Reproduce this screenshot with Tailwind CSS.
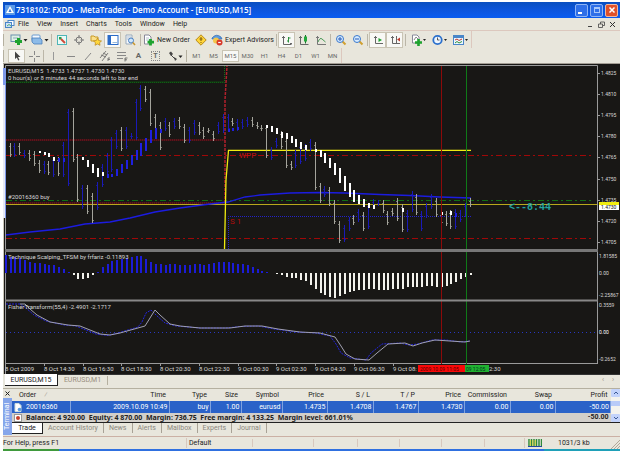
<!DOCTYPE html>
<html lang="en">
<head>
<meta charset="utf-8">
<meta name="viewport" content="width=device-width, initial-scale=1">
<title>7318102: FXDD - MetaTrader - Demo Account - [EURUSD,M15]</title>
<script src="https://cdn.jsdelivr.net/npm/@tailwindcss/browser@4"></script>
</head>
<body class="bg-white font-['Roboto','Liberation_Sans',sans-serif] text-[7px] leading-[10px] text-[#222]">
<div class="pt-[2px] pl-[3px] pr-[5px]">

    <!-- Title bar -->
    <header class="flex h-4 items-center bg-linear-to-b from-[#0a4fc0] via-[#0d55dc] to-[#0a5cf0] px-[2px] text-white">
        <svg class="h-[10px] w-[10px] shrink-0" viewBox="0 0 10 10"><rect width="10" height="10" fill="#5d9be8"/><path d="M5 1 L9 8 H1Z" fill="#fff"/><path d="M5 3.5 L6.5 7 H3.5Z" fill="#3c78d0"/></svg>
        <h1 class="ml-px grow truncate font-['Open_Sans','Noto_Sans',sans-serif] text-[8px] leading-3 font-semibold">7318102: FXDD - MetaTrader - Demo Account - [EURUSD,M15]</h1>
        <div class="flex gap-[2px]">
            <button aria-label="Minimize" class="flex h-[13px] w-[13px] items-end justify-start rounded-[2px] border border-[#8fb5f5] bg-[#2f6fe8] p-[2px]"><span class="h-[2px] w-1 bg-white"></span></button>
            <button aria-label="Restore" class="flex h-[13px] w-[13px] items-center justify-center rounded-[2px] border border-[#8fb5f5] bg-[#2f6fe8]"><span class="h-[6px] w-[6px] border border-t-2 border-[#a9c8fa]"></span></button>
            <button aria-label="Close" class="flex h-[13px] w-[13px] items-center justify-center rounded-[2px] border border-[#f0b9a0] bg-[#e0512a]">
                <svg class="h-2 w-2" viewBox="0 0 8 8"><path d="M1.5 1.5 L6.5 6.5 M6.5 1.5 L1.5 6.5" stroke="#fff" stroke-width="1.5"/></svg>
            </button>
        </div>
    </header>

    <!-- Menu -->
    <nav class="flex h-3 items-center bg-[#e8e6dc] pl-[2px]">
        <svg class="h-[9px] w-[10px] shrink-0" viewBox="0 0 10 9"><rect x="3" y=".5" width="6" height="5" fill="#fff" stroke="#4a86c8"/><rect x=".5" y="2.5" width="6" height="5" fill="#cfe2f7" stroke="#4a86c8"/><path d="M2 6 L4 4.5 L6 6" stroke="#2f9a4a" fill="none" stroke-width=".8"/></svg>
        <ul class="ml-[3px] flex grow gap-2">
            <li><a href="#">File</a></li>
            <li><a href="#">View</a></li>
            <li><a href="#">Insert</a></li>
            <li><a href="#">Charts</a></li>
            <li><a href="#">Tools</a></li>
            <li><a href="#">Window</a></li>
            <li><a href="#">Help</a></li>
        </ul>
        <div class="flex gap-1 pr-1">
            <button aria-label="Minimize chart"><svg class="h-[7px] w-[7px]" viewBox="0 0 7 7"><path d="M1 5.5 H5" stroke="#444"/></svg></button>
            <button aria-label="Restore chart"><svg class="h-[7px] w-[7px]" viewBox="0 0 7 7"><path d="M2.5 3 V1 H6.5 V4.5 H5 M.5 3 H4.5 V6.5 H.5Z" fill="none" stroke="#444" stroke-width=".8"/></svg></button>
            <button aria-label="Close chart"><svg class="h-[7px] w-[7px]" viewBox="0 0 7 7"><path d="M1 1 L6 6 M6 1 L1 6" stroke="#333"/></svg></button>
        </div>
    </nav>

    <div class="border-t border-[#dcc8be] bg-[#e8e6dc]">
        <!-- Standard toolbar -->
        <div class="flex h-[17px] w-max items-center border-r border-[#dcc8be]">
            <span class="mr-1 h-3 w-px bg-[#b5b0a0]"></span>
            <button aria-label="New chart" class="flex w-[21px] items-center justify-center">
                <svg class="h-3 w-[18px]" viewBox="0 0 18 12"><rect x="1" y="1" width="9" height="6.5" fill="#dff0e4" stroke="#6b8fae"/><path d="M3 4 H8" stroke="#8ab"/><path d="M8.5 4 V11 M5 7.5 H12" stroke="#1ea32f" stroke-width="3"/><path d="M13.500 5 H17.500 L15.500 7.500Z" fill="#222"/></svg>
            </button>
            <button aria-label="Profiles" class="flex w-[21px] items-center justify-center">
                <svg class="h-3 w-[18px]" viewBox="0 0 18 12"><rect x="1" y="1" width="8" height="6" rx="1" fill="#f4f9ff" stroke="#6b9bd0"/><path d="M1 4 H9 L11 6 V10 H3 L1 8Z" fill="#8dbbe8" stroke="#4a7fba" stroke-width=".8"/><path d="M13.500 5 H17.500 L15.500 7.500Z" fill="#222"/></svg>
            </button>
            <span class="mx-px h-3 w-px bg-[#bbb6a8]"></span>
            <button aria-label="Market watch" class="flex w-[17px] justify-center">
                <svg class="h-3 w-3" viewBox="0 0 12 12"><rect x="1.500" y="1.500" width="9" height="9" fill="#eafaf6" stroke="#4fb5b8"/><path d="M3 3 H5.500 V5.500 H3Z" fill="#2aa04a"/><path d="M5 5 L9 9" stroke="#d04a3a" stroke-width="2"/></svg>
            </button>
            <button aria-label="Data window" class="flex w-[17px] justify-center">
                <svg class="h-3 w-3" viewBox="0 0 12 12"><circle cx="6" cy="6" r="3" fill="none" stroke="#777"/><path d="M6 1 V4.500 M6 7.500 V11 M1 6 H4.500 M7.500 6 H11" stroke="#777"/></svg>
            </button>
            <button aria-label="Navigator" class="flex w-[17px] justify-center">
                <svg class="h-3 w-3" viewBox="0 0 12 12"><path d="M1 2 H4 L5 3 H8 V7 H1Z" fill="#fbe08a" stroke="#c89a28"/><path d="M7.500 4 L8.700 6.500 L11.500 7 L9.500 8.700 L10 11.300 L7.500 10 L5 11.300 L5.500 8.700 L3.500 7 L6.300 6.500Z" fill="#ffd83c" stroke="#b9851a" stroke-width=".7"/></svg>
            </button>
            <button aria-label="Terminal" aria-pressed="true" class="flex w-[17px] justify-center border border-[#c9c4b4] bg-white/70 py-px">
                <svg class="h-3 w-3" viewBox="0 0 12 12"><rect x="1" y="1.500" width="10" height="9" fill="#fff" stroke="#2c6cc8"/><rect x="1" y="1.500" width="3" height="9" fill="#2c6cc8"/><path d="M5.500 8.500 H10" stroke="#9bd"/></svg>
            </button>
            <button aria-label="Strategy tester" class="flex w-[17px] justify-center">
                <svg class="h-3 w-3" viewBox="0 0 12 12"><path d="M2 1 H8 V10 H2Z" fill="#f5f8fc" stroke="#9ab"/><path d="M3 3 H7 M3 5 H6" stroke="#9ab" stroke-width=".7"/><circle cx="7" cy="6.500" r="2.500" fill="#cfe6fb" stroke="#4a80c0"/><path d="M8.800 8.500 L11 11" stroke="#c8962c" stroke-width="1.500"/></svg>
            </button>
            <span class="mx-[2px] h-3 w-px bg-[#bbb6a8]"></span>
            <button class="flex w-[49px] items-center gap-[2px]">
                <svg class="h-3 w-3 shrink-0" viewBox="0 0 12 12"><path d="M1.500 1 H6 L8 3 V10 H1.500Z" fill="#fff" stroke="#889"/><path d="M3 4 H6 M3 6 H6" stroke="#9ab" stroke-width=".7"/><path d="M7.500 5 V11.500 M4.500 8.200 H11" stroke="#1ea32f" stroke-width="2.800"/></svg>
                <span class="whitespace-nowrap">New Order</span>
            </button>
            <button aria-label="MetaEditor" class="flex w-[17px] justify-center">
                <svg class="h-3 w-3" viewBox="0 0 12 12"><path d="M6 .8 L11.200 6 L6 11.200 L.8 6Z" fill="#ffd53a" stroke="#b88a1c"/><path d="M6 3 V7 M4.500 5 H7.500 M6 8 V9" stroke="#7a5a10"/></svg>
            </button>
            <button class="flex w-[67px] items-center justify-center gap-[2px]">
                <svg class="h-3 w-3 shrink-0" viewBox="0 0 12 12"><path d="M1 4 Q5 -1 10 3 L11 5 H1Z" fill="#5a9ae0" stroke="#2f68b0" stroke-width=".7"/><circle cx="5" cy="6.500" r="3" fill="#f4c64a"/><circle cx="8.500" cy="8.500" r="3" fill="#d8392a"/><path d="M7.200 8.500 H9.800" stroke="#fff" stroke-width="1.200"/></svg>
                <span class="whitespace-nowrap">Expert Advisors</span>
            </button>
            <span class="mr-px h-3 w-px bg-[#bbb6a8]"></span>
            <button aria-label="Bar chart" aria-pressed="true" class="flex w-[17px] justify-center border border-[#c9c4b4] bg-white/70 py-px">
                <svg class="h-3 w-3" viewBox="0 0 12 12"><path d="M2.500 2 V10.500 H10.500 M1 3.500 H4 M9 9.500 H11" stroke="#666" fill="none"/><path d="M7.500 3 V8.500 M6 7 H7.500 M7.500 4 H9.500" stroke="#2b8f3c" fill="none"/></svg>
            </button>
            <button aria-label="Candlesticks" class="flex w-[17px] justify-center">
                <svg class="h-3 w-3" viewBox="0 0 12 12"><path d="M2.500 2 V10.500 H10.500 M1 3.500 H4" stroke="#666" fill="none"/><path d="M7.500 1 V9.500" stroke="#18702a"/><rect x="6" y="2.500" width="3" height="5" fill="#22a83a"/></svg>
            </button>
            <button aria-label="Line chart" class="flex w-[17px] justify-center">
                <svg class="h-3 w-3" viewBox="0 0 12 12"><path d="M2.500 2 V10.500 H11 M1 3.500 H4" stroke="#777" fill="none"/><path d="M3 8 Q5 3 7 5 L10.500 8" stroke="#4a9a58" fill="none"/></svg>
            </button>
            <span class="mx-px h-3 w-px bg-[#bbb6a8]"></span>
            <button aria-label="Zoom in" class="flex w-[17px] justify-center">
                <svg class="h-3 w-3" viewBox="0 0 12 12"><path d="M7.500 7.500 L10.500 10.500" stroke="#d0a030" stroke-width="2"/><circle cx="5" cy="5" r="3.500" fill="#d6ebff" stroke="#3b78cc"/><path d="M5 3 V7 M3 5 H7" stroke="#2458b8"/></svg>
            </button>
            <button aria-label="Zoom out" class="flex w-[17px] justify-center">
                <svg class="h-3 w-3" viewBox="0 0 12 12"><path d="M7.500 7.500 L10.500 10.500" stroke="#d0a030" stroke-width="2"/><circle cx="5" cy="5" r="3.500" fill="#d6ebff" stroke="#3b78cc"/><path d="M3 5 H7" stroke="#2458b8"/></svg>
            </button>
            <span class="mx-px h-3 w-px bg-[#bbb6a8]"></span>
            <button aria-label="Auto scroll" aria-pressed="true" class="flex w-[17px] justify-center border border-[#c9c4b4] bg-white/70 py-px">
                <svg class="h-3 w-3" viewBox="0 0 12 12"><path d="M3.500 2 V9.500 H11 M2 3.500 H5" stroke="#666" fill="none"/><path d="M6.500 4 L10 6 L6.500 8Z" fill="#1ea32f"/></svg>
            </button>
            <button aria-label="Chart shift" aria-pressed="true" class="flex w-[17px] justify-center border border-[#c9c4b4] bg-white/70 py-px">
                <svg class="h-3 w-3" viewBox="0 0 12 12"><path d="M3.500 2 V9.500 H11 M2 3.500 H5 M7.500 2 V9" stroke="#666" fill="none"/><path d="M11 3.500 L8 5.500 L11 7.500Z" fill="#c0392b"/></svg>
            </button>
            <span class="mx-[2px] h-3 w-px bg-[#bbb6a8]"></span>
            <button aria-label="Indicators" class="flex w-[21px] justify-center">
                <svg class="h-3 w-[18px]" viewBox="0 0 18 12"><path d="M2.500 1 H7 L9 3 V9 H2.500Z" fill="#fff" stroke="#889"/><path d="M4 6 L6 3 L8 5" stroke="#888" fill="none"/><path d="M8.500 5 V12 M5 8.500 H12" stroke="#1ea32f" stroke-width="2.600"/><path d="M13 5 H16 L14.500 7Z" fill="#222"/></svg>
            </button>
            <button aria-label="Periods" class="flex w-[21px] justify-center">
                <svg class="h-3 w-[18px]" viewBox="0 0 18 12"><circle cx="6.500" cy="6" r="4.200" fill="#eef6ff" stroke="#2b70cc" stroke-width="1.800"/><path d="M6.500 3.500 V6 H8.500" stroke="#333" fill="none" stroke-width=".8"/><path d="M13 5 H16 L14.500 7Z" fill="#222"/></svg>
            </button>
            <button aria-label="Templates" class="flex w-[21px] justify-center">
                <svg class="h-3 w-[18px]" viewBox="0 0 18 12"><rect x="1.500" y="1.500" width="10" height="9" fill="#eef6ff" stroke="#4a86c8"/><path d="M1.500 3 H11.500" stroke="#4a86c8" stroke-width="2"/><path d="M3 6 L5 5 L7 6.500 L10 5" stroke="#c0392b" fill="none"/><path d="M3 9 L5 7.500 L7 9 L10 7.500" stroke="#2b8f3c" fill="none"/><path d="M13 5 H16 L14.500 7Z" fill="#222"/></svg>
            </button>
        </div>

        <!-- Line studies and timeframes -->
        <div class="flex h-[15px] w-max items-center border-r border-[#dcc8be] text-[6px] text-[#666]">
            <span class="mr-1 h-3 w-px bg-[#b5b0a0]"></span>
            <button aria-label="Cursor" aria-pressed="true" class="flex w-[17px] justify-center border border-[#c9c4b4] bg-white/70">
                <svg class="h-3 w-3" viewBox="0 0 12 12"><path d="M4 1.500 V9 L5.800 7.500 L7.200 10.500 L8.500 10 L7 7 H9.500Z" fill="#444"/></svg>
            </button>
            <button aria-label="Crosshair" class="flex w-[17px] justify-center"><svg class="h-3 w-3" viewBox="0 0 12 12"><path d="M6.500 1 V5 M6.500 8 V12 M1 6.500 H5 M8 6.500 H12" stroke="#888"/></svg></button>
            <span class="mx-px h-3 w-px bg-[#bbb6a8]"></span>
            <button aria-label="Vertical line" class="flex w-[17px] justify-center"><svg class="h-3 w-3" viewBox="0 0 12 12"><path d="M5.500 2 V10" stroke="#999"/></svg></button>
            <button aria-label="Horizontal line" class="flex w-[17px] justify-center"><svg class="h-3 w-3" viewBox="0 0 12 12"><path d="M2 6.500 H10" stroke="#888"/></svg></button>
            <button aria-label="Trendline" class="flex w-[17px] justify-center"><svg class="h-3 w-3" viewBox="0 0 12 12"><path d="M3 10 L9 3" stroke="#888"/></svg></button>
            <button aria-label="Channel" class="flex w-[17px] justify-center"><svg class="h-3 w-3" viewBox="0 0 12 12"><path d="M1 8 L7 1 M3 11 L9 3 M2 5 L7 7 M4 3 L8 5 M9 8 H11 M9 8 V11 M9 9.500 H11" stroke="#666" stroke-width=".8" fill="none"/></svg></button>
            <button aria-label="Fibonacci" class="flex w-[17px] justify-center"><svg class="h-3 w-3" viewBox="0 0 12 12"><path d="M1 2.500 H10 M1 5.500 H10 M1 8.500 H7" stroke="#888"/><path d="M9 8 H11.500 M9 8 V11.500 M9 9.800 H11" stroke="#555" stroke-width=".8"/></svg></button>
            <button aria-label="Text" class="w-[17px] text-[8px] font-bold">A</button>
            <button aria-label="Text label" class="flex w-[17px] justify-center"><span class="w-[9px] border border-dotted border-[#888] text-[7px] leading-[8px] font-bold">T</span></button>
            <button aria-label="Arrows" class="flex w-[21px] justify-center"><svg class="h-3 w-[18px]" viewBox="0 0 18 12"><path d="M3 3 L5 1.500 L7 4 L5 6Z" fill="#444"/><path d="M5 5 L9 9" stroke="#444"/><path d="M8 7 L11 9 L9 11Z" fill="#444"/><path d="M12.500 5.500 H16.500 L14.500 8Z" fill="#222"/></svg></button>
            <span class="mx-px h-3 w-px bg-[#b5b0a0]"></span>
            <button class="w-[17px]">M1</button>
            <button class="w-[17px]">M5</button>
            <button aria-pressed="true" class="w-[17px] border border-[#c9c4b4] bg-white/70">M15</button>
            <button class="w-[17px]">M30</button>
            <button class="w-[17px]">H1</button>
            <button class="w-[17px]">H4</button>
            <button class="w-[17px]">D1</button>
            <button class="w-[17px]">W1</button>
            <button class="w-[17px]">MN</button>
        </div>
    </div>

    <!-- Chart window -->
    <svg id="chart" class="block w-full" viewBox="3 63 617 311" font-size="6" fill="#d8d8d8">
        <rect x="3" y="63" width="617" height="311" fill="#181715"/>
        <path d="M3 63.500 H620" stroke="#a39d94"/>
        <path d="M5.500 374 V65.500 H597.500 V363.500 M5 363.500 H598" fill="none" stroke="#9a9a9a"/>
        <path d="M3.500 64 V374" stroke="#c8c4b8"/>
        <rect x="3" y="68" width="3" height="150" fill="#e6e9f5"/>
        <path d="M5.500 68 V218" stroke="#7d98ea"/>
        <rect x="3" y="68" width="3" height="17" fill="#7d98ea"/>
        <!-- levels -->
        <g fill="none">
            <path d="M6 82.500 H224.500 V66" stroke="#157018" stroke-dasharray="1 1"/>
            <path d="M6 82 H224" stroke="#0c4c10" stroke-width="1"/>
            <path d="M6 140 H225 M6 203 H225" stroke="#7d1620" stroke-width="1.500" stroke-dasharray="1 1"/>
            <path d="M6 140 H225 M6 203 H225" stroke="#5d1018"/>
            <path d="M225 203 V100 L227 66" stroke="#b0202c" stroke-width="1.500" stroke-dasharray="3 1"/>
            <path d="M6 155.500 H593 M6 238.500 H593" stroke="#a00808" stroke-dasharray="6 3 2 3"/>
            <path d="M6 200.500 H593" stroke="#117014" stroke-dasharray="6 3 2 3"/>
            <path d="M6 204.500 H597" stroke="#b8a81c"/>
            <path d="M228.500 249 V216.500 H471" stroke="#2222c8" stroke-dasharray="1 1"/>
            <path d="M6 235 L30 232 L60 229 L85 224 L110 222 L130 218 L155 212 L180 208 L210 204 L228 202 L245 197 L260 195 L290 193 L320 192.500 L345 193 L380 194.500 L410 195.500 L440 197 L471 198" stroke="#1c1ce0" stroke-width="1.300"/>
            <path d="M224.500 249 L226 180 L228.500 150.300 H471" stroke="#f0ec10" stroke-width="1.300"/>
            <path d="M6 332.500 H597" stroke="#2838c0" stroke-dasharray="1 3"/>
        </g>
        <g id="bars"></g>
        <path d="M441.500 66 V364" stroke="#8c0a0a"/>
        <path d="M466.500 66 V364" stroke="#0f7a18"/>
        <path d="M5 250.500 H598" stroke="#777" stroke-width="3"/>
        <path d="M5 300.500 H598" stroke="#888" stroke-width="2"/>
        <!-- FisherTransform -->
        <g fill="none">
            <path d="M6 304 L20 304 L26 308 L34 315 L46 321 L64 325 L76 326 L86 330 L96 334 L108 335.500 L118 333 L138 327 L142 322 L146 313 L151 310 L156 315 L165 323 L176 326 L200 328 L226 328 L240 326.500 L258 326 L274 329 L296 332 L316 333 L330 336 L336 344 L341 353 L350 358 L366 360 L371 353 L382 344 L400 343 L409 345 L418 344 L432 340 L446 340 L461 342 L470 341" stroke="#2424dc" stroke-dasharray="2 1"/>
            <path d="M20 304 H25 L30 309 L37 315 L50 322 L68 325 L80 326 L90 330 L100 334 L110 335 L120 333 L145 326 L150 318 L155 310 L160 315 L170 324 L180 326 L200 328 L230 328 L245 326 L262 326 L278 329 L300 332 L320 333 L335 337 L341 346 L346 354 L355 359 L369 360 L377 353 L388 344 L405 343 L413 346 L422 343 L435 340 L450 341 L465 342 L470 341" stroke="#a0a0b0"/>
        </g>
        <!-- captions -->
        <text x="8" y="73">EURUSD,M15&#160; 1.4733 1.4737 1.4730 1.4730</text>
        <text x="8" y="80">0 hour(s) or 8 minutes 44 seconds left to bar end</text>
        <text x="8" y="199">#20016360 buy</text>
        <text x="8" y="259">Technique Scalping_TFSM by frfariz -0.11893</text>
        <text x="8" y="309">FisherTransform(55,4) -2.4901 -2.1717</text>
        <text x="239" y="158" fill="#c81010" font-size="8">WPP</text>
        <text x="230" y="224" fill="#b00c0c" font-size="8">S 1</text>
        <text x="509" y="210" fill="#22a5a0" font-size="10" font-weight="bold" font-family="Liberation Mono, monospace">&lt;--8:44</text>
        <!-- price scale -->
        <g id="prices" font-size="5"></g>
        <rect x="599" y="202" width="20" height="3" fill="#f0ec10"/>
        <rect x="599" y="205" width="20" height="5" fill="#fff"/>
        <g font-size="5">
            <text x="601" y="209" fill="#111">1.4730</text>
            <text x="599" y="258">1.81585</text>
            <text x="599" y="275">0.00</text>
            <text x="599" y="297">-2.25867</text>
            <text x="599" y="307">0.3559</text>
            <text x="599" y="334" fill="#fff">0.00</text>
            <text x="599" y="361">-0.2652</text>
        </g>
        <!-- time scale -->
        <g id="times"></g>
        <text x="489" y="371">2:30</text>
        <rect x="418" y="365" width="47" height="7" fill="#f80808"/>
        <rect x="465" y="365" width="24" height="7" fill="#20b030"/>
        <g font-size="5">
            <text x="420" y="371" fill="#500">2009.10.09 11:05</text>
            <text x="466" y="371" fill="#032">09 12:05</text>
        </g>
    </svg>

    <!-- Chart tabs -->
    <div class="bg-[#e8e6dc] pb-[2px]">
        <div class="flex h-3 items-start pl-[2px]">
            <button class="h-3 w-[53px] border-r border-b border-[#222] bg-white text-center">EURUSD,M15</button>
            <div class="flex grow items-center border-t border-[#333] pr-[2px] text-[#9a8f80]">
                <button class="w-[50px] border-r border-[#b5b0a0] leading-[9px]">EURUSD,M1</button>
                <span class="grow"></span>
                <button aria-label="Scroll tabs left" class="w-[10px]">‹</button>
                <button aria-label="Scroll tabs right" class="w-[10px]">›</button>
            </div>
        </div>
    </div>

    <!-- Terminal -->
    <section class="flex border-t border-[#b5b0a0] bg-[#e8e6dc]">
        <div class="flex w-[9px] shrink-0 flex-col items-center">
            <button aria-label="Close terminal" class="flex h-[9px] items-center"><svg class="h-[5px] w-[5px]" viewBox="0 0 5 5"><path d="M.5 .5 L4.500 4.500 M4.500 .5 L.5 4.500" stroke="#222"/></svg></button>
            <span class="w-full grow rotate-180 bg-[#86a6ea] text-center leading-[9px] text-white [writing-mode:vertical-rl]">Terminal</span>
        </div>
        <div class="min-w-0 grow">
            <div class="flex border-b border-[#222]">
                <table class="grow table-fixed border-collapse text-right whitespace-nowrap">
                    <colgroup>
                        <col class="w-[58px]"><col class="w-[99px]"><col class="w-[41px]"><col class="w-[31px]"><col class="w-[41px]"><col class="w-[45px]"><col class="w-[46px]"><col class="w-[45px]"><col class="w-[46px]"><col class="w-[46px]"><col class="w-[45px]"><col>
                    </colgroup>
                    <thead>
                        <tr class="h-3 *:p-0 *:pr-[3px] *:font-normal">
                            <th class="text-left"><span class="pl-[7px]">Order</span><span class="pl-2 text-[#a09a8c]">⁄</span></th><th>Time</th><th>Type</th><th>Size</th><th>Symbol</th><th>Price</th><th>S / L</th><th>T / P</th><th>Price</th><th>Commission</th><th>Swap</th><th>Profit</th>
                        </tr>
                    </thead>
                    <tbody>
                        <tr class="h-3 bg-[#2a62c8] text-white *:border-r *:border-[#7fa2e0] *:p-0 *:pr-px">
                            <td><span class="flex items-center gap-1 pl-[2px]"><svg class="h-[9px] w-2" viewBox="0 0 8 9"><path d="M1 .5 H5 L7 2.500 V8.500 H1Z" fill="#fff" stroke="#cdd"/><circle cx="5.500" cy="6.500" r="1.800" fill="#5a9ae0"/></svg>20016360</span></td>
                            <td>2009.10.09 10:49</td><td>buy</td><td>1.00</td><td>eurusd</td><td>1.4735</td><td>1.4708</td><td>1.4767</td><td>1.4730</td><td>0.00</td><td>0.00</td><td>-50.00</td>
                        </tr>
                        <tr class="bg-[#d2cfca] leading-[9px] font-bold text-[#222] *:p-0">
                            <td colspan="11"><span class="flex items-center gap-1 pl-[2px]"><svg class="h-2 w-2" viewBox="0 0 8 8"><rect x=".5" y=".5" width="7" height="7" fill="#fff" stroke="#999"/><circle cx="4" cy="4" r="2" fill="#c8402a"/></svg><span class="font-['Noto_Sans','Open_Sans',sans-serif]">Balance: 4 920.00&#160; Equity: 4 870.00&#160; Margin: 736.75&#160; Free margin: 4 133.25&#160; Margin level: 661.01%</span></span></td>
                            <td><span class="pr-[2px]">-50.00</span></td>
                        </tr>
                    </tbody>
                </table>
                <div class="flex w-[9px] shrink-0 flex-col justify-between bg-[#f4f3ee]">
                    <button aria-label="Scroll up" class="flex h-2 items-center justify-center rounded-[1px] bg-[#c3d3fb]"><svg class="h-1 w-[6px]" viewBox="0 0 6 4"><path d="M1 3 L3 1 L5 3" fill="none" stroke="#3c5a96"/></svg></button>
                    <span class="-mt-1 h-[5px] bg-[#b9cbf8]"></span>
                    <button aria-label="Scroll down" class="flex h-2 items-center justify-center rounded-[1px] bg-[#c3d3fb]"><svg class="h-1 w-[6px]" viewBox="0 0 6 4"><path d="M1 1 L3 3 L5 1" fill="none" stroke="#3c5a96"/></svg></button>
                </div>
            </div>
            <div class="flex h-3 items-start text-[#8c8880]">
                <button class="h-[11px] w-[31px] border-r border-b border-[#222] bg-white text-[#222]">Trade</button>
                <div class="flex divide-x divide-[#a8a296] *:px-[5px]">
                    <button>Account History</button>
                    <button>News</button>
                    <button>Alerts</button>
                    <button>Mailbox</button>
                    <button>Experts</button>
                    <button>Journal</button>
                    <span></span>
                </div>
            </div>
        </div>
    </section>

    <!-- Status bar -->
    <footer class="bg-[#e8e6dc] pt-px">
        <div class="flex h-[13px] items-center border-t border-[#cbb0a4]">
            <span class="w-[183px]">For Help, press F1</span>
            <span class="w-[66px] border-l border-[#d8c8be] pl-[2px]">Default</span>
            <span class="h-2 w-[61px] border-l border-[#d8c8be]"></span>
            <span class="h-2 w-11 border-l border-[#d8c8be]"></span>
            <span class="h-2 w-[42px] border-l border-[#d8c8be]"></span>
            <span class="h-2 w-[42px] border-l border-[#d8c8be]"></span>
            <span class="h-2 w-[43px] border-l border-[#d8c8be]"></span>
            <span class="h-2 w-10 border-l border-[#d8c8be]"></span>
            <span class="flex grow items-center gap-4 border-l border-[#d8c8be] pl-[3px]">
                <svg class="h-2 w-[14px]" viewBox="0 0 14 8"><path d="M1 0 V8 M3.500 0 V8 M6 0 V8 M8.500 0 V8 M11 0 V8 M13.500 0 V8" stroke="#2f8a3c" stroke-width="1.500"/><path d="M2.300 1 V8 M4.800 1 V8 M7.300 1 V8" stroke="#d8d23c"/><path d="M0 7.500 H14" stroke="#2448a0"/></svg>
                1031/3 kb
            </span>
            <svg class="h-[9px] w-[9px] self-end" viewBox="0 0 9 9"><path d="M0 9 L9 0 M3 9 L9 3 M6 9 L9 6" stroke="#b0a898"/></svg>
        </div>
    </footer>
    <div class="flex h-[2px]"><span class="w-14 bg-[#3f9a3c]"></span><span class="grow bg-[#2f70e0]"></span><span class="w-[76px] bg-[#1fa0b8]"></span></div>
</div>

<script>
const NS = 'http://www.w3.org/2000/svg';
const STEP = 4.843;
const X0 = 5.8;

function add(parent, tag, attrs, text) {
    const el = document.createElementNS(NS, tag);
    for (const k in attrs) el.setAttribute(k, attrs[k]);
    if (text) el.textContent = text;
    document.getElementById(parent).appendChild(el);
}

// colour, high, low for every bar
const candles = `w143-157 b143-157 w143-155 b150-158 w150-161 w151-166 w160-173 b161-174 w161-175 b157-177 w157-176 b142-177
b109-186 w108-162 w154-202 b185-209 w185-214 w193-223 b182-210 b164-187 b153-174 b137-172 b130-149 w127-151 b127-149 b133-139
b99-140 b85-111 w86-102 w89-126 w114-133 w122-150 b118-131 w122-137 b118-129 w117-129 w124-143 b127-143 b120-135 w122-135
w127-139 w128-133 w131-141 b122-134 b114-133 b114-131 w118-126 b119-131 b119-129 b117-127 w117-127 w122-129 w125-131 w125-158
b147-160 b138-148 w131-149 w138-168 w161-170 b150-168 b144-164 b144-161 b139-151 w142-190 w183-203 b186-197 w187-206
w200-224 w221-243 b225-242 b217-231 w215-225 b209-222 w212-231 b203-229 b199-208 b200-206 w200-213 w211-225 w208-216
w198-221 w204-232 b210-232 b191-212 w194-215 b211-231 b203-218 b194-209 w198-217 w212-225 w211-226 w210-229 b209-229
b210-222 b203-217 w198-207`.split(/\s+/);

candles.forEach((c, n) => {
    const [hi, lo] = c.slice(1).split('-').map(Number);
    const x = Math.round(X0 + STEP * (n + 1)) - 0.5;
    const stroke = c[0] === 'w' ? '#a4a49c' : '#1a1ab8';
    add('bars', 'path', {d: `M${x} ${hi} V${lo}`, stroke});
    add('bars', 'path', {d: `M${x - 1.5} ${hi + 3.5} h1 M${x + 0.5} ${lo - 2.5} h1`, stroke, opacity: 0.7});
});

// smoothed bodies: index, top, bottom
const down = [[7,151,153],[8,152,155],[9,153,157],[10,157,161],[16,157,160],[17,160,167],[18,164,173],[19,168,177],[20,172,176],
    [54,125,128],[55,126,132],[56,128,134],[57,132,138],[58,133,139],[59,136,143],[60,139,147],[61,142,149],[62,145,150],
    [64,149,152],[65,150,157],[66,153,163],[67,158,168],[68,163,175],[69,168,183],[70,176,191],[71,183,197],[72,190,202],
    [73,195,204],[74,199,207],[75,203,208],[76,205,209],[82,208,212],[90,212,215],[92,211,215]];
const up = [[11,158,162],[12,158,162],[21,174,178],[22,174,177],[23,169,176],[24,164,173],[25,160,169],[26,155,165],[27,150,160],
    [28,143,156],[29,138,151],[30,130,143],[31,128,139],[32,129,133],[46,129,132],[47,128,131],[48,127,130],[93,213,217]];
down.forEach(([i, a, b]) => add('bars', 'rect', {x: Math.round(X0 + STEP * i) - 1, y: a, width: 2, height: b - a, fill: '#fff'}));
up.forEach(([i, a, b]) => add('bars', 'rect', {x: Math.round(X0 + STEP * i) - 1, y: a, width: 2, height: b - a, fill: '#2020e0'}));

// histogram
const hist = [18,16,16,15,13,11,10,10,9,8,8,6,4,1,-2,-6,-6,-5,-2,1,6,9,12,13,14,15,16,17,17,14,11,9,9,8,9,9,8,8,8,9,9,8,9,10,11,11,
    11,10,9,9,8,6,4,2,1,0,-1,-2,-4,-5,-5,-7,-8,-12,-16,-20,-22,-24,-25,-23,-21,-19,-18,-17,-17,-16,-16,-17,-17,-17,-16,-16,-16,
    -14,-14,-14,-14,-13,-13,-14,-14,-13,-11,-9,-6,-4,-2];
hist.forEach((v, i) => add('bars', 'rect', {
    x: Math.round(X0 + STEP * i) - 1, y: v > 0 ? 273 - v : 273, width: 2, height: Math.abs(v), fill: v > 0 ? '#1c1cd8' : '#f2f2ec'
}));

['1.4825', '1.4810', '1.4795', '1.4780', '1.4765', '1.4750', '1.4735', '1.4720', '1.4705'].forEach((p, i) => {
    const y = 75 + Math.round(i * 21.1);
    add('prices', 'text', {x: 601, y}, p);
    add('prices', 'path', {d: `M597 ${y - 1.5} H600`, stroke: '#9a9a9a'});
});

['8 Oct 2009', '8 Oct 14:30', '8 Oct 16:30', '8 Oct 18:30', '8 Oct 20:30', '8 Oct 22:30', '9 Oct 00:30', '9 Oct 02:30',
    '9 Oct 04:30', '9 Oct 06:30', '9 Oct 08:'].forEach((t, i) => {
    const x = 5 + Math.round(i * 38.75);
    add('times', 'text', {x, y: 371}, t);
    add('times', 'path', {d: `M${x + 0.5} 363 V366`, stroke: '#9a9a9a'});
});
</script>
</body>
</html>
